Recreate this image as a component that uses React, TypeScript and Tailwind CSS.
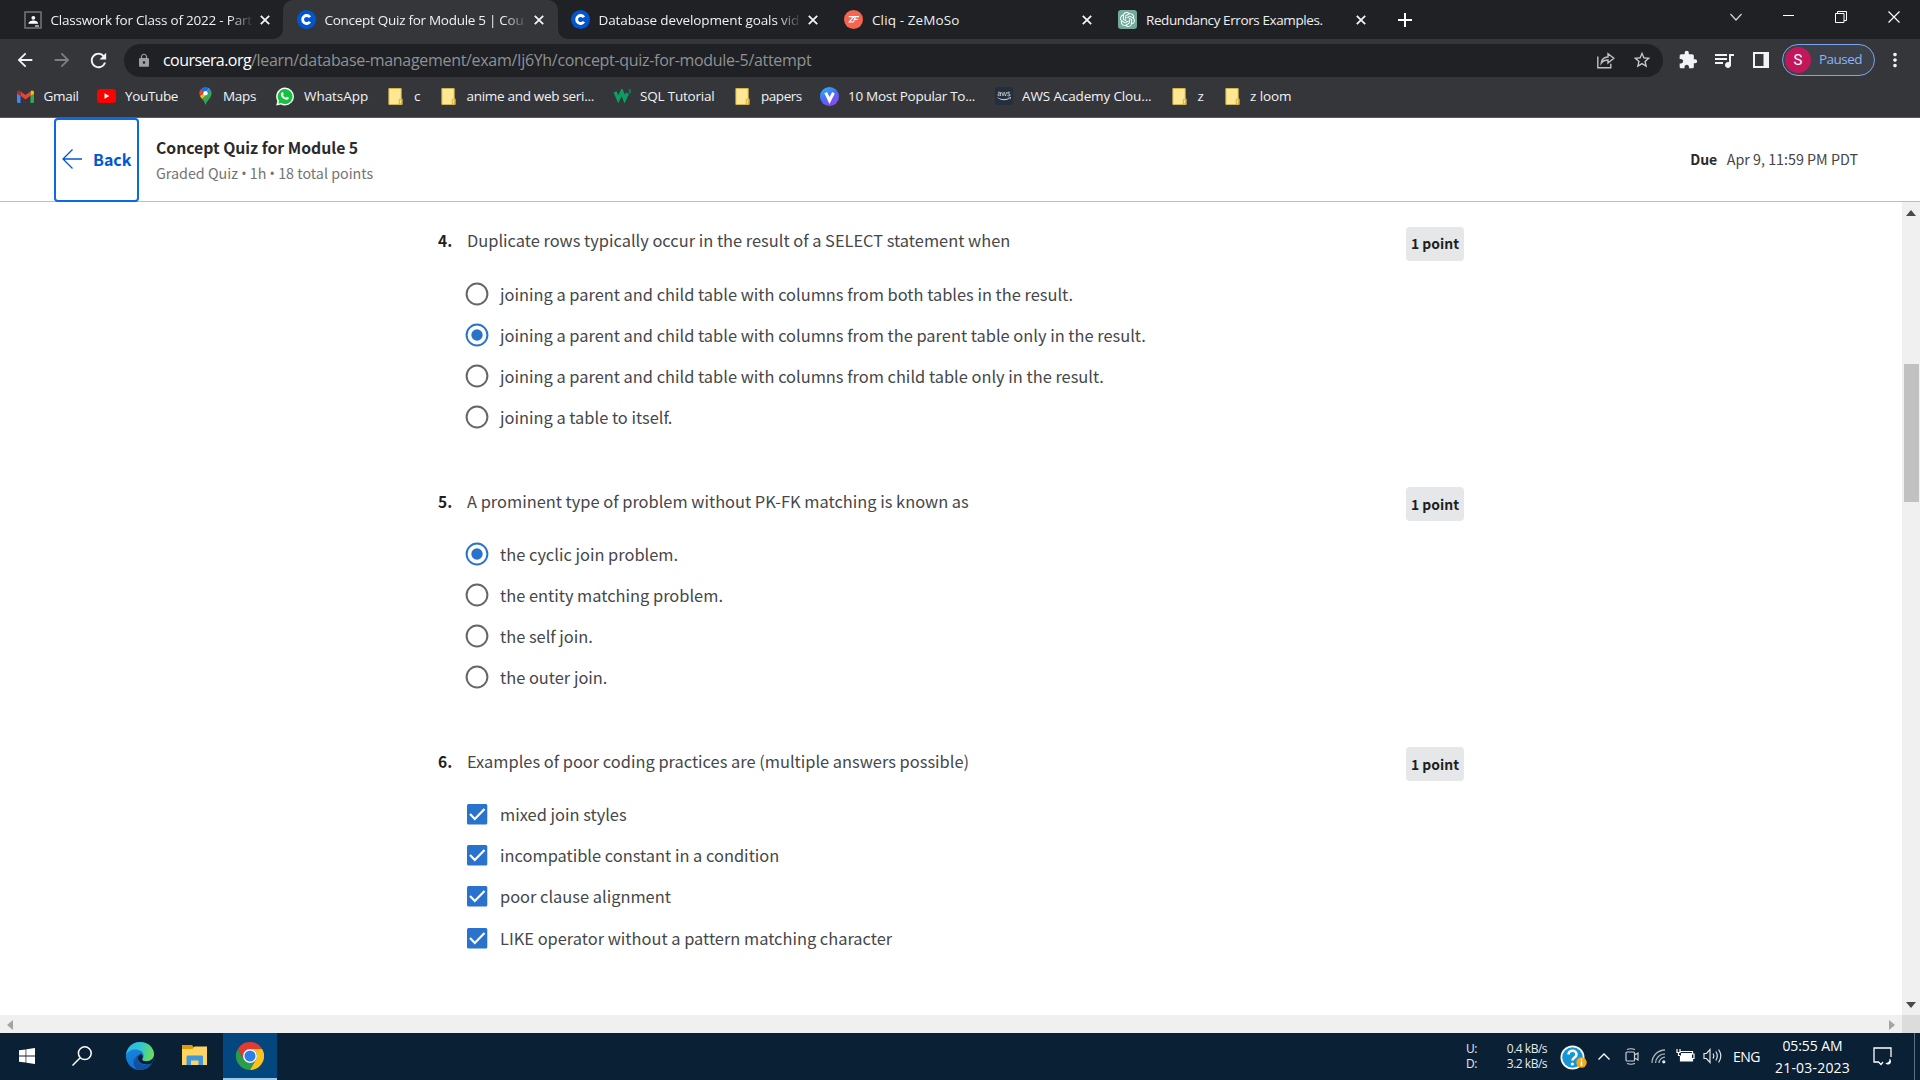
import React from "react";
import { MdArrowBack, MdExtension, MdLock, MdMoreVert, MdQueueMusic, MdRefresh, MdStarBorder } from "react-icons/md";
import { SiOpenai } from "react-icons/si";
import { FaAws } from "react-icons/fa";

/* ---------- small drawings ---------- */

const CloseX = () => (
  <svg viewBox="0 0 10 10" className="h-[10px] w-[10px] shrink-0" stroke="#f1f3f4" strokeWidth="1.8" fill="none">
    <path d="M.8.8l8.4 8.4M9.2.8L.8 9.2" />
  </svg>
);

const ClassroomIcon = () => (
  <svg viewBox="0 0 18 18" className="h-[18px] w-[18px] shrink-0">
    <rect width="18" height="18" rx="1" fill="#5f6368" />
    <rect x="2" y="2" width="14" height="14" fill="#202124" />
    <circle cx="9.300" cy="6.800" r="1.900" fill="#fff" />
    <path d="M4.500 12.800c0-2.400 2.600-3.200 4.800-3.200s4.800.8 4.800 3.200z" fill="#fff" />
    <rect x="11" y="14" width="4" height="2" fill="#9aa0a6" />
  </svg>
);

const CourseraIcon = () => (
  <svg viewBox="0 0 20 20" className="h-[19px] w-[19px] shrink-0">
    <circle cx="10" cy="10" r="10" fill="#0056d2" />
    <path d="M13.6 7.6A4.2 4.2 0 1 0 13.6 12.4" fill="none" stroke="#fff" strokeWidth="3" />
  </svg>
);

const CliqIcon = () => (
  <svg viewBox="0 0 20 20" className="h-[19px] w-[19px] shrink-0">
    <circle cx="10" cy="10" r="10" fill="#f5654f" />
    <path d="M5 7h5.5L5.500 12.600h4M10 12.800l2-5.800h3.800M11.400 9.800h3" fill="none" stroke="#fff" strokeWidth="1.200" />
  </svg>
);

const Folder = () => (
  <svg viewBox="0 0 15 18" className="h-[17px] w-[15px] shrink-0">
    <path d="M.5.5h13v11h1v6H.5z" fill="#ffe793" stroke="#d9b84a" strokeWidth="1" />
    <path d="M11.5 17v-5h2.5v5z" fill="#ffe38a" stroke="#d3ad35" strokeWidth="1" />
  </svg>
);

const Gmail = () => (
  <svg viewBox="0 0 24 18" className="h-[13px] w-[17px] shrink-0">
    <path d="M0 3v13.4c0 .9.7 1.6 1.6 1.6H5V8z" fill="#4285f4" />
    <path d="M24 3v13.4c0 .9-.7 1.6-1.6 1.6H19V8z" fill="#34a853" />
    <path d="M19 8V2l1-.8C21.700 0 24 1.100 24 3.200V5z" fill="#fbbc04" />
    <path d="M5 8V1.800L12 7l7-5.200V8l-7 5.200z" fill="#ea4335" />
    <path d="M0 3.200C0 1.100 2.300 0 4 1.200l1 .8v6L0 5z" fill="#c5221f" />
  </svg>
);

const YouTube = () => (
  <svg viewBox="0 0 19 14" className="h-[14px] w-[19px] shrink-0">
    <rect width="19" height="14" rx="3.5" fill="#f00" />
    <path d="M7.500 4.200v5.600L12.300 7z" fill="#fff" />
  </svg>
);

const Maps = () => (
  <svg viewBox="0 0 13 19" className="h-[18px] w-[13px] shrink-0">
    <path d="M6.500 0A6.300 6.300 0 0 0 1.500 2.500L5 5.500 9.500.8A7 7 0 0 0 6.500 0z" fill="#1a73e8" />
    <path d="M1.500 2.500A6.300 6.300 0 0 0 .8 9.400L5 5.500z" fill="#ea4335" />
    <path d="M9.500.8L4 7.300.8 9.400c.5 1.200 1.300 2.200 2.200 3.300L12 3.500A6 6 0 0 0 9.500.8z" fill="#4285f4" />
    <path d="M.8 9.400c.5 1.200 1.300 2.200 2.200 3.300L8.400 8 4.200 7z" fill="#fbbc04" />
    <path d="M12 3.500L3 12.700C4.600 14.700 5.700 16 6.100 18.300c.1.700.7.700.8 0C7.700 14 12.900 12 12.900 6.500c0-1.100-.3-2.100-.9-3z" fill="#34a853" />
    <circle cx="6.500" cy="6.500" r="2.300" fill="#fff" />
  </svg>
);

const WhatsApp = () => (
  <span className="flex h-[19px] w-[18px] shrink-0 items-center justify-center">
    <svg viewBox="0 0 20 20" className="h-[19px] w-[19px]">
      <path d="M10 0a10 10 0 0 1 0 20 10 10 0 0 1-4.700-1.200L.2 20l1.300-5A10 10 0 0 1 10 0z" fill="#fff" />
      <path d="M10 1.600a8.400 8.400 0 1 1-4.300 15.600l-3.200.8.900-3.100A8.400 8.400 0 0 1 10 1.600z" fill="#15c141" />
      <path d="M6.800 5.400c.6-.3 1-.2 1.200.3l.6 1.500c.1.500-.7 1-.7 1.300.6 1.300 1.700 2.300 3.100 2.800.5 0 .9-1.100 1.300-1l1.700.8c.4.3.3.9 0 1.500-1.100 1.500-3 1.200-4.900.2-1.800-1-3.100-2.600-3.600-4-.3-1.300.2-2.700 1.300-3.400z" fill="#fff" />
    </svg>
  </span>
);

const W3 = () => (
  <svg viewBox="0 0 19 15" className="h-[14px] w-[19px] shrink-0" fill="none" stroke="#0b9e63">
    <path d="M1.500 3l3.500 8 3.800-8 3 8 3-6.500" strokeWidth="3.600" />
    <path d="M15.800.8h2.200v1.800h-1.500M18 2.600v1.600h-2.200" strokeWidth=".8" />
  </svg>
);

const VIcon = () => (
  <svg viewBox="0 0 20 20" className="h-[19px] w-[19px] shrink-0">
    <defs>
      <linearGradient id="vg" x1="0" y1="0" x2="0.6" y2="1">
        <stop offset="0" stopColor="#1cc4ff" />
        <stop offset=".55" stopColor="#4a6cf7" />
        <stop offset="1" stopColor="#8a4af0" />
      </linearGradient>
    </defs>
    <circle cx="10" cy="10" r="10" fill="url(#vg)" />
    <path d="M6 6l4 8.200L14.200 6" fill="none" stroke="#fff" strokeWidth="3.200" />
  </svg>
);

const AwsIcon = () => (
  <span className="flex h-[18px] w-[18px] shrink-0 items-center justify-center bg-[#232f3e]">
    <FaAws className="h-[14px] w-[14px] text-[#d8dadd]" />
  </span>
);

/* ---------- browser chrome ---------- */

function Tab({ icon, title, width, lead, textCls, fade, sep }: {
  icon: React.ReactNode; title: string; width: string; lead: string; textCls: string; fade?: boolean; sep?: boolean;
}) {
  return (
    <div className={"flex h-full shrink-0 items-center " + width + " " + lead}>
      {icon}
      <span
        className={
          "ml-[9px] w-[203px] shrink-0 overflow-hidden text-[13.500px] leading-5 whitespace-nowrap text-[#eef0f2] " +
          (fade ? "[mask-image:linear-gradient(to_right,black_88%,transparent_100%)] " : "") + textCls
        }
      >
        {title}
      </span>
      <span className="ml-[6.500px] flex"><CloseX /></span>
      {sep && <span className="ml-[14.500px] h-[23px] w-px bg-[#5b5e63]" />}
    </div>
  );
}

function TabStrip() {
  return (
    <div className="flex h-[39px] shrink-0 bg-[#202124]">
      <Tab width="w-[283px]" lead="pl-[23.500px]" icon={<ClassroomIcon />} title="Classwork for Class of 2022 - Part" textCls="tracking-[-0.220px]" fade />
      <div className="relative h-full w-[275px] shrink-0 rounded-t-[10px] bg-[#35363a]">
        <svg viewBox="0 0 10 10" className="absolute bottom-0 -left-[10px] h-[10px] w-[10px]"><path d="M10 0v10H0A10 10 0 0 0 10 0z" fill="#35363a" /></svg>
        <svg viewBox="0 0 10 10" className="absolute -right-[10px] bottom-0 h-[10px] w-[10px]"><path d="M0 0v10h10A10 10 0 0 1 0 0z" fill="#35363a" /></svg>
        <Tab width="w-[275px]" lead="pl-[13.500px]" icon={<CourseraIcon />} title="Concept Quiz for Module 5 | Cou" textCls="tracking-[-0.280px]" fade />
      </div>
      <Tab width="w-[274px]" lead="pl-[12.500px]" icon={<CourseraIcon />} title="Database development goals vid" textCls="tracking-[-0.120px]" fade sep />
      <Tab width="w-[274px]" lead="pl-[12px]" icon={<CliqIcon />} title="Cliq - ZeMoSo" textCls="tracking-[0.120px]" sep />
      <Tab
        width="w-[274px]" lead="pl-[12px]" title="Redundancy Errors Examples." textCls="tracking-[-0.400px]" sep
        icon={<span className="flex h-[19px] w-[19px] shrink-0 items-center justify-center rounded-[3px] bg-[#75a99c]"><SiOpenai className="h-[15px] w-[15px] text-white" /></span>}
      />
      <svg viewBox="0 0 14 14" className="mt-[12.500px] ml-[18px] h-[14px] w-[14px]" stroke="#fff" strokeWidth="2"><path d="M7 0v14M0 7h14" /></svg>
      <div className="mr-[20px] ml-auto flex h-[33px] items-center text-white">
        <svg viewBox="0 0 12 8" className="mr-[41px] h-[8px] w-[12px]" fill="none" stroke="#d5d6d8" strokeWidth="1.200"><path d="M.5 1L6 7l5.500-6" /></svg>
        <span className="mr-[41px] -mt-[2px] h-px w-[11px] bg-white" />
        <svg viewBox="0 0 12 12" className="mr-[41px] h-[12px] w-[12px]" fill="none" stroke="#fff"><path d="M.5 2.500h8.500v9H.5zM2.500 2.500v-2h9v9H9" /></svg>
        <svg viewBox="0 0 12 12" className="h-[12px] w-[12px]" stroke="#fff" strokeWidth="1.200"><path d="M.5.5l11 11M11.500.5l-11 11" /></svg>
      </div>
    </div>
  );
}

function Toolbar() {
  return (
    <div className="flex h-[43px] shrink-0 items-center bg-[#35363a] pb-px">
      <MdArrowBack className="ml-[14px] h-[22px] w-[22px] text-[#f1f3f4]" />
      <MdArrowBack className="ml-[15px] h-[22px] w-[22px] rotate-180 text-[#7d7f83]" />
      <MdRefresh className="ml-[14px] h-[23px] w-[23px] text-[#f1f3f4]" />
      <div className="ml-[14px] flex h-[33px] w-[1539px] shrink-0 items-center rounded-full bg-[#202124]">
        <MdLock className="ml-[12px] h-[15px] w-[16px] text-[#9aa0a6]" />
        <div className="ml-[11px] text-[16px] leading-5 whitespace-nowrap text-[#8e9195]">
          <span className="tracking-[-0.560px] text-white">coursera.org</span>
          <span className="tracking-[-0.310px]">/learn/database-management/exam/Ij6Yh/concept-quiz-for-module-5/attempt</span>
        </div>
        <svg viewBox="0 0 18 17" className="ml-auto h-[17px] w-[18px]" fill="none" stroke="#bdc1c6" strokeWidth="1.400">
          <path d="M.8 4.500v11.300h13v-4" />
          <path d="M4.200 11.200C4.500 7.500 7 5.200 11 5V1.800L16.800 6.300 11 11V8c-3 0-5.200 1-6.800 3.200z" />
        </svg>
        <MdStarBorder className="mr-[11px] ml-[17px] h-[20px] w-[20px] text-[#c8cacd]" />
      </div>
      <MdExtension className="ml-[15px] h-[20px] w-[20px] text-[#f1f3f4]" />
      <MdQueueMusic className="ml-[14px] h-[24px] w-[24px] text-[#f1f3f4]" />
      <svg viewBox="0 0 16 16" className="ml-[17px] h-[16px] w-[16px] shrink-0"><path d="M0 0h16v16H0zM2 2v12h8.500V2z" fill="#f1f3f4" fillRule="evenodd" /></svg>
      <div className="ml-[13px] flex h-[32px] w-[93px] shrink-0 items-center rounded-full border-[1.500px] border-[#7ba6ee] bg-[#3c4049] pl-[2px]">
        <span className="flex h-[26px] w-[26px] items-center justify-center rounded-full bg-[#c2185b] font-[Roboto,sans-serif] text-[15px] text-white">S</span>
        <span className="-mt-[1px] ml-[8px] text-[13.500px] tracking-[-0.550px] text-[#8ab4f8]">Paused</span>
      </div>
      <MdMoreVert className="ml-[9px] h-[22px] w-[22px] text-[#f1f3f4]" />
    </div>
  );
}

const bookmarks: { icon: React.ReactNode; label: string; cell: string; gap: string; text: string }[] = [
  { icon: <Gmail />, label: "Gmail", cell: "w-[80px]", gap: "ml-[9.500px]", text: "tracking-[-0.300px]" },
  { icon: <YouTube />, label: "YouTube", cell: "w-[102px]", gap: "ml-[9px]", text: "tracking-[-0.350px]" },
  { icon: <Maps />, label: "Maps", cell: "w-[77px]", gap: "ml-[11px]", text: "tracking-[-0.300px]" },
  { icon: <WhatsApp />, label: "WhatsApp", cell: "w-[112px]", gap: "ml-[10px]", text: "tracking-[-0.050px]" },
  { icon: <Folder />, label: "c", cell: "w-[53px]", gap: "ml-[11px]", text: "" },
  { icon: <Folder />, label: "anime and web seri...", cell: "w-[172px]", gap: "ml-[10.500px]", text: "tracking-[-0.300px]" },
  { icon: <W3 />, label: "SQL Tutorial", cell: "w-[122px]", gap: "ml-[8px]", text: "tracking-[-0.200px]" },
  { icon: <Folder />, label: "papers", cell: "w-[85px]", gap: "ml-[11px]", text: "tracking-[-0.450px]" },
  { icon: <VIcon />, label: "10 Most Popular To...", cell: "w-[175px]", gap: "ml-[9px]", text: "tracking-[-0.280px]" },
  { icon: <AwsIcon />, label: "AWS Academy Clou...", cell: "w-[177px]", gap: "ml-[9px]", text: "tracking-[-0.130px]" },
  { icon: <Folder />, label: "z", cell: "w-[53px]", gap: "ml-[10.500px]", text: "" },
  { icon: <Folder />, label: "z loom", cell: "w-[80px]", gap: "ml-[10px]", text: "tracking-[-0.100px]" },
];

function Bookmarks() {
  return (
    <div className="flex h-[36px] shrink-0 border-b border-[#5d5a5e] bg-[#35363a] pb-[7px] pl-[17px]">
      {bookmarks.map((b) => (
        <div key={b.label} className={"flex shrink-0 items-center " + b.cell}>
          {b.icon}
          <span className={"-mt-px text-[13.500px] leading-5 whitespace-nowrap text-[#f1f3f4] " + b.gap + " " + b.text}>{b.label}</span>
        </div>
      ))}
    </div>
  );
}

/* ---------- quiz page ---------- */

function Header() {
  return (
    <div className="flex h-[84px] shrink-0 border-b border-[#bdbdbd] bg-white font-['Noto_Sans_CJK_SC',sans-serif]">
      <div className="ml-[54px] flex h-[84px] w-[85px] shrink-0 items-center rounded-[4px] border-2 border-[#0a6adf] pb-[2px] pl-[6px] text-[#0056d2]">
        <svg viewBox="0 0 20 20" className="h-[20px] w-[20px]" fill="none" stroke="#0056d2" strokeWidth="1.300"><path d="M20 10H1M10.500.5L1 10l9.500 9.500" /></svg>
        <span className="ml-[11px] text-[16px] font-bold">Back</span>
      </div>
      <div className="ml-[17px] flex flex-col pt-[18px] whitespace-nowrap">
        <span className="text-[15.750px] leading-[24px] font-bold text-[#2a2a2a]">Concept Quiz for Module 5</span>
        <span className="mt-px text-[14.300px] leading-[24px] text-[#737373]">
          Graded Quiz <span className="font-['Open_Sans']">•</span> 1h <span className="font-['Open_Sans']">•</span> 18 total points
        </span>
      </div>
      <div className="mr-[62px] ml-auto flex items-center pb-px whitespace-nowrap text-[#454545]">
        <span className="text-[14px] font-bold text-[#2a2a2a]">Due</span>
        <span className="ml-[9.500px] text-[14.300px]">Apr 9, 11:59 PM PDT</span>
      </div>
    </div>
  );
}

const Radio = ({ on }: { on: boolean }) => (
  <svg viewBox="0 0 24 24" className="h-[24px] w-[24px] shrink-0" fill="none">
    <circle cx="12" cy="12" r="10.400" stroke={on ? "#2a73cc" : "#666"} strokeWidth="2" />
    {on && <circle cx="12" cy="12" r="5.700" fill="#2a73cc" />}
  </svg>
);

const Check = () => (
  <svg viewBox="0 0 24 24" className="h-[24px] w-[24px] shrink-0" fill="none">
    <rect x="2" y="2" width="20.300" height="20.500" rx="1.500" fill="#2a73cc" />
    <path d="M5 12l4.800 5L19.500 7" stroke="#fff" strokeWidth="2.200" />
  </svg>
);

const questions = [
  {
    n: "4.", multi: false, picked: [1],
    q: "Duplicate rows typically occur in the result of a SELECT statement when",
    options: [
      "joining a parent and child table with columns from both tables in the result.",
      "joining a parent and child table with columns from the parent table only in the result.",
      "joining a parent and child table with columns from child table only in the result.",
      "joining a table to itself.",
    ],
  },
  {
    n: "5.", multi: false, picked: [0],
    q: "A prominent type of problem without PK-FK matching is known as",
    options: ["the cyclic join problem.", "the entity matching problem.", "the self join.", "the outer join."],
  },
  {
    n: "6.", multi: true, picked: [0, 1, 2, 3],
    q: "Examples of poor coding practices are (multiple answers possible)",
    options: [
      "mixed join styles",
      "incompatible constant in a condition",
      "poor clause alignment",
      "LIKE operator without a pattern matching character",
    ],
  },
];

function Quiz() {
  return (
    <div className="flex flex-1 flex-col pt-[24.400px] pl-[438px] text-[16.420px] text-[#454749]">
      {questions.map((q) => (
        <div key={q.n} className="h-[260.200px] w-[1026px]">
          <div className="flex h-[46.900px] items-start">
            <span className="w-[29px] text-[15.500px] leading-[28px] font-bold text-[#1f1f1f]">{q.n}</span>
            <span className="flex-1 leading-[28px]">{q.q}</span>
            <span className="mt-[0.500px] flex h-[34px] w-[58px] items-center justify-center rounded-[4px] bg-[#e5e7e8] text-[13.900px] font-bold whitespace-nowrap text-[#1f1f1f]">1 point</span>
          </div>
          {q.options.map((o, i) => (
            <div key={o} className="flex h-[41.125px] items-center pl-[27px]">
              {q.multi ? <Check /> : <Radio on={q.picked.includes(i)} />}
              <span className="ml-[11px] leading-[28px]">{o}</span>
            </div>
          ))}
        </div>
      ))}
    </div>
  );
}

function Page() {
  return (
    <div className="flex h-[813px] shrink-0 overflow-hidden bg-white font-['Noto_Sans_CJK_SC',sans-serif]">
      <Quiz />
      <div className="flex w-[18px] shrink-0 flex-col items-center bg-[#f0f0f0]">
        <svg viewBox="0 0 10 6" className="mt-[8px] h-[6px] w-[10px]"><path d="M5 0l5 6H0z" fill="#4a4a4a" /></svg>
        <div className="mt-[148px] h-[138px] w-[15px] bg-[#c1c1c1]" />
        <svg viewBox="0 0 10 6" className="mt-auto mb-[7px] h-[6px] w-[10px]"><path d="M5 6l5-6H0z" fill="#4a4a4a" /></svg>
      </div>
    </div>
  );
}

function HScroll() {
  return (
    <div className="flex h-[18px] shrink-0 bg-[#f0f0f0]">
      <div className="flex flex-1 items-center justify-between pt-px pr-[7px] pl-[7px]">
        <svg viewBox="0 0 6 10" className="h-[10px] w-[6px]"><path d="M6 0v10L0 5z" fill="#a3a3a3" /></svg>
        <svg viewBox="0 0 6 10" className="h-[10px] w-[6px]"><path d="M0 0v10l6-5z" fill="#a3a3a3" /></svg>
      </div>
      <div className="w-[18px] bg-[#dcdcdc]" />
    </div>
  );
}

/* ---------- taskbar ---------- */

const EdgeIcon = () => (
  <svg viewBox="0 0 28 28" className="h-[28px] w-[28px] shrink-0">
    <defs>
      <linearGradient id="e1" x1="0" y1=".3" x2="1" y2=".5">
        <stop offset="0" stopColor="#2fb5e8" />
        <stop offset=".5" stopColor="#30c6cf" />
        <stop offset="1" stopColor="#6bdf52" />
      </linearGradient>
      <linearGradient id="e2" x1="0" y1="0" x2=".5" y2="1">
        <stop offset="0" stopColor="#1a8fe0" />
        <stop offset="1" stopColor="#0c6fd0" />
      </linearGradient>
    </defs>
    <circle cx="14" cy="14" r="14" fill="url(#e2)" />
    <path d="M0 13C1 5 7 0 14 0c8 0 14 5.600 14 12 0 4.600-3.500 7.200-7.500 7.200-3 0-4.700-1-4.300-2 .8-1.300 1.800-2.600 1.200-5C16.500 9 13 7.500 9.500 7.500 5 7.500 1.500 9.500 0 13z" fill="url(#e1)" />
    <path d="M10 14.500c-2.500 6 2 11.500 8 11.500 3 0 6-1.500 7.500-4.500A14 14 0 0 1 14 28C8.500 27.500 5 20 10 14.500z" fill="#114f9e" />
    <path d="M16.200 17.200c-.4 1 1.300 2 4.300 2 3.300 0 6.300-1.500 7.500-5l0 1.500-2 5.600c-4 2.200-12.500 1.500-14-4.300-.5-2 .5-4 2.500-5 2.300.5 3 3.200 1.700 5.200z" fill="#0b2036" />
    <path d="M12 17c0 5 6.500 7.500 13.500 4.500C23.500 25 20 26 18 26c-6 0-10.500-5.500-7.500-11.500C11 13.500 12 13 12 13z" fill="#14509f" />
  </svg>
);

const ChromeIcon = () => (
  <svg viewBox="0 0 48 48" className="h-[28px] w-[28px]">
    <path d="M24 12h20.785A24 24 0 0 0 3.215 12l10.393 18A12 12 0 0 1 24 12z" fill="#e33b2e" />
    <path d="M13.608 30L3.215 12A24 24 0 0 0 24 48l10.392-18a12 12 0 0 1-20.784 0z" fill="#2b9c48" />
    <path d="M34.392 30L24 48a24 24 0 0 0 20.785-36H24a12 12 0 0 1 10.392 18z" fill="#fcc21b" />
    <circle cx="24" cy="24" r="12" fill="#fff" />
    <circle cx="24" cy="24" r="9.500" fill="#2f7de9" />
  </svg>
);

function Taskbar() {
  return (
    <div className="flex h-[47px] shrink-0 items-center bg-[#0a2035] text-white">
      <svg viewBox="0 0 16 16" className="-mt-px ml-[19px] h-[16px] w-[16px]" fill="#fff"><path d="M0 2.300l6.600-.9v6.200H0zM7.300 1.200L16 0v7.600H7.300zM0 8.400h6.600v6.200L0 13.700zM7.300 8.400H16V16l-8.700-1.200z" /></svg>
      <svg viewBox="0 0 20 20" className="-mt-px ml-[37px] h-[20px] w-[20px]" fill="none" stroke="#fff" strokeWidth="1.500"><circle cx="12.800" cy="7.200" r="6.400" /><path d="M8.200 11.800L.5 19.500" /></svg>
      <span className="-mt-[2px] ml-[34px]"><EdgeIcon /></span>
      <svg viewBox="0 0 25 21" className="-mt-[2px] ml-[28px] h-[21px] w-[25px] shrink-0">
        <path d="M0 0h10l2 2.500h0V6H0z" fill="#e09a0a" />
        <path d="M0 4h10.500l2-2.500H25V20H0z" fill="#ffd45f" />
        <path d="M4.500 20v-8c0-1 .7-1.500 1.500-1.500h13.500c.8 0 1.500.5 1.500 1.500v8h-4.500v-4.500H9V20z" fill="#3f97dc" />
      </svg>
      <div className="ml-[16px] flex h-full w-[54px] items-center justify-center border-b-2 border-[#9cc9ec] bg-[#04477e]"><ChromeIcon /></div>

      <div className="-mt-px ml-auto flex w-[81px] flex-col text-[12px] leading-[15px] tracking-[-0.500px] text-[#e6ebf0]">
        <div className="flex justify-between"><span>U:</span><span>0.4 kB/s</span></div>
        <div className="flex justify-between"><span>D:</span><span>3.2 kB/s</span></div>
      </div>
      <svg viewBox="0 0 27 26" className="mt-[2px] ml-[13px] h-[26px] w-[27px] shrink-0">
        <circle cx="12.500" cy="12.500" r="12" fill="#fff" />
        <circle cx="12.500" cy="12.500" r="10.300" fill="#1795d4" />
        <path d="M8.500 9.500c0-5 8-5 8 0 0 3-4 3-4 6" fill="none" stroke="#fff" strokeWidth="2.600" />
        <circle cx="12.300" cy="19" r="1.600" fill="#fff" />
        <circle cx="21.500" cy="17.500" r="5.200" fill="#f0a81f" />
        <path d="M21.500 16.500v4.500M21.500 13.800v1.600" stroke="#fff" strokeWidth="1.500" />
      </svg>
      <svg viewBox="0 0 12 7" className="-mt-px ml-[11px] h-[7px] w-[12px]" fill="none" stroke="#fff" strokeWidth="1.300"><path d="M.5 6.500L6 1l5.500 5.500" /></svg>
      <svg viewBox="0 0 14 17" className="-mt-px ml-[15px] h-[17px] w-[14px]" fill="none" stroke="#c9d0d6" strokeWidth="1.200"><rect x="1" y="4" width="8.500" height="9" rx="1" /><path d="M9.500 7L13 5v7l-3.500-2M2 1.500Q6 0 10 1.500M2 15.500Q6 17 10 15.500" /></svg>
      <svg viewBox="0 0 15 15" className="ml-[12px] h-[15px] w-[15px]" fill="none" stroke="#aab3bb" strokeWidth="1.300"><path d="M1 14A13 13 0 0 1 14 1M4.500 14A9.500 9.500 0 0 1 14 4.800M8 14a6 6 0 0 1 6-5.800" /><circle cx="12.800" cy="12.800" r="1.600" fill="#e6ebf0" stroke="none" /></svg>
      <svg viewBox="0 0 19 13" className="-mt-[2px] ml-[10px] h-[13px] w-[19px]" fill="#fff"><path d="M5 4h11v8H5z" /><path d="M4.500 2.500h12v2.500h1.500v4.500h-1.500v2.500H4.500V7M1 0v3.500h3V0M2.500 3.500v3h2" fill="none" stroke="#fff" strokeWidth="1.200" /></svg>
      <svg viewBox="0 0 19 16" className="-mt-px ml-[8px] h-[16px] w-[19px]" fill="none" stroke="#dfe4e8" strokeWidth="1.200"><path d="M1 5.500h2.500L7 1.500v13l-3.500-4H1z" /><path d="M10 5.500q1.500 2.500 0 5M12.800 3.500q3 4.500 0 9M15.600 1.500q4.400 6.500 0 13" /></svg>
      <span className="ml-[11px] w-[28px] text-[14px] tracking-[-0.500px]">ENG</span>
      <div className="ml-[13px] flex w-[77px] flex-col items-center text-[14px] leading-[22px] whitespace-nowrap">
        <span className="tracking-[-0.080px]">05:55 AM</span>
        <span className="tracking-[0.200px]">21-03-2023</span>
      </div>
      <svg viewBox="0 0 19 19" className="ml-[22px] h-[19px] w-[19px]" fill="none" stroke="#fff" strokeWidth="1.300"><path d="M10 15l-2 2.500L5.500 15H1V1h17v9" /><path d="M16.500 11.500c.3 3-1.500 4.500-4 4.500 1.500 2.500 5.500 2 5.500-1.500 0-1.500-.7-2.500-1.500-3z" fill="#fff" stroke="none" /></svg>
      <span className="mr-[5px] ml-[22px] h-full w-px bg-[#5f6f7e]" />
    </div>
  );
}

export default function App() {
  return (
    <div className="flex h-[1080px] w-[1920px] flex-col overflow-hidden bg-white font-['Open_Sans',sans-serif]">
      <TabStrip />
      <Toolbar />
      <Bookmarks />
      <Header />
      <Page />
      <HScroll />
      <Taskbar />
    </div>
  );
}
